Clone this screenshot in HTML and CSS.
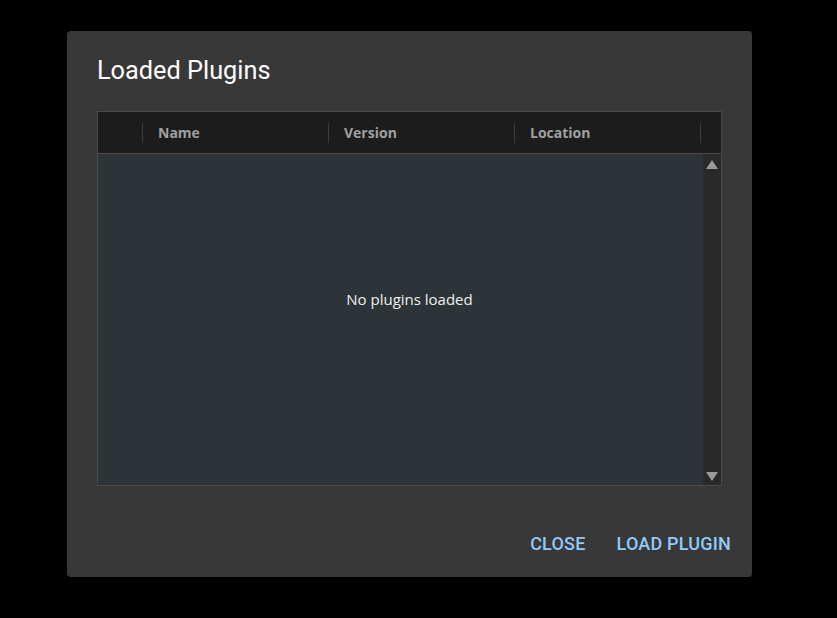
FILE: index.html
```html
<!DOCTYPE html>
<html>
<head>
<meta charset="utf-8">
<link rel="stylesheet" href="styles.css">
</head>
<body>
<div class="dialog">
  <h2 class="title">Loaded Plugins</h2>
  <div class="grid">
    <div class="grid-head">
      <div class="hcell first"></div>
      <div class="hcell">Name</div>
      <div class="hcell">Version</div>
      <div class="hcell">Location</div>
      <div class="hcell last"></div>
    </div>
    <div class="grid-body">
      <div class="rows"></div>
      <div class="scrollbar">
        <svg class="arrow" width="12" height="10" viewBox="0 0 12 10"><path d="M6 0 L12 9 L0 9 Z" fill="#9a9a9a"/></svg>
        <svg class="arrow" width="12" height="10" viewBox="0 0 12 10"><path d="M0 1 L12 1 L6 10 Z" fill="#9a9a9a"/></svg>
      </div>
    </div>
    <div class="overlay">No plugins loaded</div>
  </div>
  <div class="actions">
    <button class="btn">CLOSE</button>
    <button class="btn">LOAD PLUGIN</button>
  </div>
</div>
</body>
</html>
```
FILE: styles.css
```css
html, body {
  margin: 0;
  background: #000;
  height: 100%;
}
body {
  padding: 31px 0 0 67px;
  box-sizing: border-box;
}
.dialog {
  width: 685px;
  height: 546px;
  background: #383838;
  border-radius: 4px;
  box-sizing: border-box;
  padding: 0 30px;
  display: flex;
  flex-direction: column;
  font-family: Roboto, sans-serif;
}
.title {
  margin: 0;
  padding-top: 26px;
  height: 54px;
  box-sizing: border-box;
  font-size: 25.3px;
  font-weight: 400;
  line-height: 28px;
  color: #fff;
  margin-bottom: 26px;
}
.grid {
  position: relative;
  width: 625px;
  height: 375px;
  border: 1px solid #4a4a4a;
  box-sizing: border-box;
  display: flex;
  flex-direction: column;
  font-family: "Open Sans", sans-serif;
}
.grid-head {
  height: 40px;
  background: #1c1c1c;
  border-bottom: 1px solid #4a4a4a;
  display: flex;
  align-items: center;
  flex: none;
  padding-top: 1px;
}
.hcell {
  height: 20px;
  line-height: 20px;
  width: 186px;
  box-sizing: border-box;
  border-left: 1px solid #3c3c3c;
  padding-left: 15px;
  color: #a0a0a0;
  font-size: 14px;
  font-weight: 700;
}
.hcell.first {
  width: 44px;
  border-left: none;
}
.hcell.last {
  width: 20px;
}
.grid-body {
  flex: 1;
  display: flex;
  background: #2d3437;
}
.rows {
  flex: 1;
}
.overlay {
  position: absolute;
  inset: 0;
  display: flex;
  align-items: center;
  justify-content: center;
  color: #eee;
  font-size: 15px;
  pointer-events: none;
}
.scrollbar {
  width: 18px;
  background: #292929;
  display: flex;
  flex-direction: column;
  justify-content: space-between;
  align-items: center;
  padding: 6px 0 4px;
}
.arrow {
  display: block;
}
.actions {
  display: flex;
  justify-content: flex-end;
  gap: 23px;
  margin-top: 41px;
  margin-right: -13px;
}
.btn {
  background: none;
  border: none;
  padding: 6px 4px;
  color: #90caf9;
  font-family: Roboto, sans-serif;
  font-size: 18px;
  font-weight: 500;
  letter-spacing: 0.2px;
}
```
